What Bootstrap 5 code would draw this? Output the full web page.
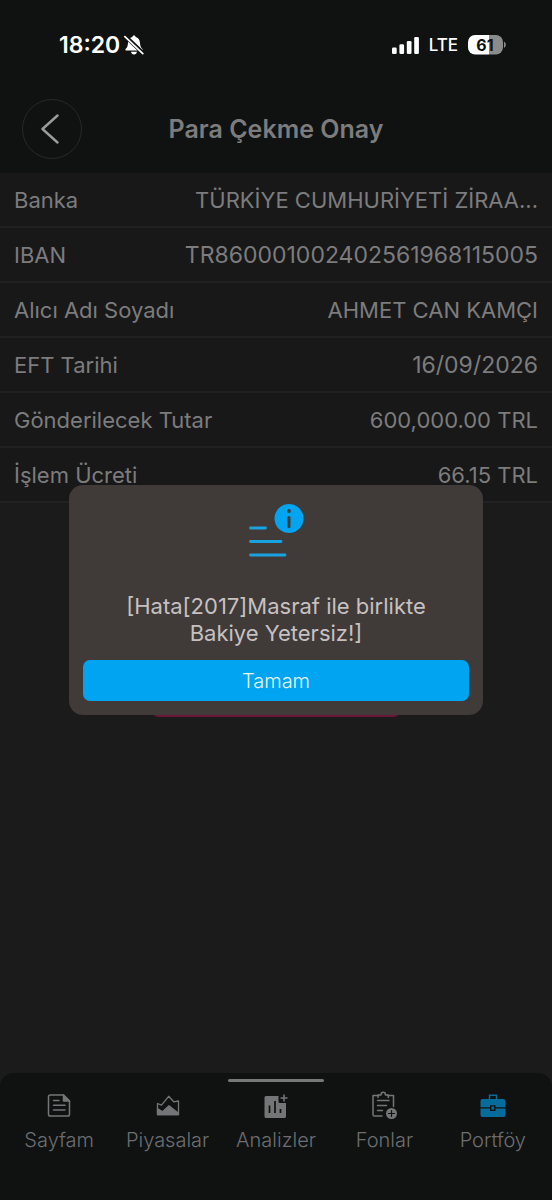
<!DOCTYPE html>
<html lang="tr">
<head>
<meta charset="utf-8">
<meta name="viewport" content="width=device-width, initial-scale=1">
<title>Para Çekme Onay</title>
<link href="https://cdn.jsdelivr.net/npm/bootstrap@5.3.0/dist/css/bootstrap.min.css" rel="stylesheet">
<style>
  body { background: #1b1b1b; color: #7c7c7e; font-family: Inter, "Liberation Sans", sans-serif; font-size: 22px; line-height: 28px; }
  .app-header { background: #101211; padding-bottom: 14px; }
  .status-bar { color: #fff; padding: 30px 46px 0 59px; height: 60px; }
  .status-bar .clock { font-size: 23px; font-weight: 600; }
  .status-bar .carrier { font-size: 17px; font-weight: 500; }
  .status-icons { gap: 10px; }
  .title-bar { margin-top: 39px; padding: 0 22px; display: grid; grid-template-columns: 60px 1fr 60px; align-items: center; }
  .title-bar h1 { font-size: 25px; font-weight: 600; line-height: 32px; }
  .back-btn { width: 60px; height: 60px; border: 1px solid #272928; color: #9b9b9b; }
  .details { background: #181818; color: #7c7c7e; }
  .details tr { height: 55px; padding: 0 14px; border-bottom: 2px solid #202122; }
  .details th, .details td { padding: 0; font-weight: 400; white-space: nowrap; }
  .details .digits { font-size: 23px; }
  .confirm-btn { width: 250px; height: 50px; margin-top: 164px; background: #6b1539; border-radius: 8px; }
  .tab-bar { background: #101211; border-radius: 14px 14px 0 0; height: 127px; padding: 6px 5px 0; }
  .tab-handle { width: 96px; height: 3px; background: #777879; }
  .tab-bar a { color: #6d6e71; font-size: 20px; font-weight: 300; line-height: 24px; }
  .tab-bar svg { display: block; margin: 8px auto 6px; }
  .alert-box { background: #403a38; border: 0; border-radius: 14px; padding: 14px; color: #c6c1c0; }
  .alert-box p { font-weight: 400; line-height: 27px; margin: 35px 0 13px; }
  .alert-box svg { display: block; margin: 3px auto 0; }
  .ok-btn, .ok-btn:hover { height: 41px; padding: 0; background: #00a4f0; color: #e6f6ff; border: 0; border-radius: 7px; font-size: 20px; font-weight: 300; }
</style>
</head>
<body class="min-vh-100 d-flex flex-column">
<header class="app-header">
  <div class="status-bar d-flex justify-content-between align-items-center">
    <div class="d-flex align-items-center gap-1">
      <span class="clock">18:20</span>
      <svg width="20" height="20" viewBox="0 0 20 20" role="img" aria-label="Sessiz">
        <path d="M10 .5c1 0 1.600.7 1.600 1.500 2.600.7 4.200 2.800 4.400 5.800.2 3.400.7 4.600 2.400 6.200.5.500.3 1.400-.5 1.400H2.100c-.8 0-1-.9-.5-1.400C3.300 12.400 3.800 11.200 4 7.800 4.200 4.800 5.800 2.700 8.400 2 8.400 1.200 9 .5 10 .5zM7 16.800h6c-.2 1.600-1.400 2.700-3 2.700s-2.800-1.100-3-2.700z" fill="#fff"/>
        <path d="M1.200 1.100 19 18" stroke="#101211" stroke-width="4"/>
        <path d="M.9 1.600 18.800 18.600" stroke="#fff" stroke-width="1.700" stroke-linecap="round"/>
      </svg>
    </div>
    <div class="status-icons d-flex align-items-center">
      <svg width="27" height="17" viewBox="0 0 27 17" fill="#fff" role="img" aria-label="Sinyal"><rect y="10.500" width="4.700" height="6.500" rx="1.300"/><rect x="7.400" y="7.300" width="4.700" height="9.700" rx="1.300"/><rect x="14.800" y="4" width="4.700" height="13" rx="1.300"/><rect x="22.200" width="4.700" height="17" rx="1.300"/></svg>
      <span class="carrier">LTE</span>
      <svg width="38" height="20" viewBox="0 0 38 20" role="img" aria-label="Pil yüzde 61">
        <path d="M7 0h14v19.500H7a7 7 0 0 1-7-7V7a7 7 0 0 1 7-7z" fill="#fff"/><path d="M21 0h7a7 7 0 0 1 7 7v5.500a7 7 0 0 1-7 7h-7z" fill="#8b8b8b"/><path d="M36 6.500c2.400 1.500 2.400 5 0 6.500z" fill="#8b8b8b"/>
        <text x="17" y="15.500" text-anchor="middle" font-family="Inter, sans-serif" font-size="16" font-weight="700" fill="#101211">61</text>
      </svg>
    </div>
  </div>
  <div class="title-bar">
    <button type="button" class="back-btn btn rounded-circle p-0 d-flex align-items-center justify-content-center" aria-label="Geri">
      <svg width="22" height="32" viewBox="0 0 22 32" fill="none" stroke="currentColor" stroke-width="2.400" stroke-linecap="round" stroke-linejoin="round"><path d="M16.500 2.500 1.500 16l15 13.500"/></svg>
    </button>
    <h1 class="m-0 text-center">Para Çekme Onay</h1>
  </div>
</header>

<main class="flex-grow-1">
  <table class="details d-block w-100">
    <tbody class="d-block">
      <tr class="d-flex justify-content-between align-items-center"><th scope="row">Banka</th><td>TÜRKİYE CUMHURİYETİ ZİRAA...</td></tr>
      <tr class="d-flex justify-content-between align-items-center"><th scope="row">IBAN</th><td class="digits">TR860001002402561968115005</td></tr>
      <tr class="d-flex justify-content-between align-items-center"><th scope="row">Alıcı Adı Soyadı</th><td>AHMET CAN KAMÇI</td></tr>
      <tr class="d-flex justify-content-between align-items-center"><th scope="row">EFT Tarihi</th><td class="digits">16/09/2026</td></tr>
      <tr class="d-flex justify-content-between align-items-center"><th scope="row">Gönderilecek Tutar</th><td>600,000.00 TRL</td></tr>
      <tr class="d-flex justify-content-between align-items-center"><th scope="row">İşlem Ücreti</th><td>66.15 TRL</td></tr>
    </tbody>
  </table>
  <button type="button" class="confirm-btn btn d-block mx-auto" aria-label="Onayla"></button>
</main>

<nav class="tab-bar">
  <div class="tab-handle rounded-pill mx-auto"></div>
  <div class="row g-0 text-center">
    <a href="#" class="col text-decoration-none">
      <svg width="28" height="32" viewBox="0 0 28 32" fill="none" stroke="#747577" stroke-width="1.500" stroke-linecap="round" stroke-linejoin="round"><path d="M18.500 5H5.300Q3.500 5 3.500 6.800v17.400Q3.500 26 5.300 26h17.400q1.800 0 1.800-1.800V11z"/><path d="M18.500 5v6h6z" fill="#747577"/><path d="M8.500 10.500h5.500M8.500 15.200h11.500M8.500 20h11.500"/></svg>
      Sayfam</a>
    <a href="#" class="col text-decoration-none">
      <svg width="28" height="32" viewBox="0 0 28 32" fill="none" stroke="#747577" stroke-width="1.300" stroke-linejoin="round"><path d="M3.500 24.500V13.500l4 1.700L14.700 6.300l5 5.500 4.800-.8v13.500z"/><path d="M3.500 18.500l5 3.300 6.500-6 5 4 4.500 3.500v1.200h-21z" fill="#747577"/></svg>
      Piyasalar</a>
    <a href="#" class="col text-decoration-none">
      <svg width="28" height="32" viewBox="0 0 28 32"><path d="M4 6h12.500v5.500q0 1.500 1.500 1.500h6v13.500q0 1.500-1.500 1.500H4q-1.500 0-1.500-1.500V7.500Q2.500 6 4 6z" fill="#747577"/><path d="M7.500 15.500v7.500M13 11v12M18.500 19v4" stroke="#101211" stroke-width="1.700"/><path d="M22 4.500v7M18.500 8h7" stroke="#747577" stroke-width="1.600"/></svg>
      Analizler</a>
    <a href="#" class="col text-decoration-none">
      <svg width="28" height="32" viewBox="0 0 28 32" fill="none" stroke="#747577" stroke-width="1.500" stroke-linecap="round" stroke-linejoin="round"><path d="M12 26H4.300Q3 26 3 24.700V5.500h5.500M17.500 5.500H23.500V16.500"/><path d="M8 7.500V5h3c0-3.600 4.500-3.600 4.500 0h2.800v2.500M7.500 10.500h11.500M7.500 15.500h9M7.500 20.500h5"/><circle cx="21.500" cy="23.500" r="5.500" fill="#747577" stroke="none"/><path d="M21.500 20.500v6M18.500 23.500h6" stroke="#101211" stroke-width="1.200"/></svg>
      Fonlar</a>
    <a href="#" class="col text-decoration-none" aria-current="page">
      <svg width="28" height="32" viewBox="0 0 28 32"><path d="M3.500 9h20.500q2.500 0 2.500 2v6.300h-10V15.200H11v2.100H1.500V11q0-2 2-2zM1.500 18.500H11V21h5.500v-2.500h10V25q0 2-2 2h-21q-2 0-2-2z" fill="#066c9c"/><path d="M10.500 9V5.300h7V9" fill="none" stroke="#066c9c" stroke-width="1.500"/><rect x="12.400" y="16.500" width="2.700" height="3.200" fill="#066c9c"/></svg>
      Portföy</a>
  </div>
</nav>

<div class="modal d-block" role="dialog" aria-modal="true" aria-labelledby="alertText">
  <div class="modal-dialog modal-dialog-centered w-75 mx-auto">
    <div class="alert-box modal-content text-center">
      <svg width="56" height="56" viewBox="0 0 56 56" fill="none" stroke="#18a2df" stroke-width="2.800" stroke-linecap="round"><path d="M2.500 26h15M2.500 39.500h30.500M2.500 53h34.500"/><circle cx="41" cy="16.500" r="14.500" fill="#00a4f0" stroke="none"/><path d="M41 15.500v9" stroke="#403a38" stroke-width="3"/><circle cx="41" cy="9" r="1.900" fill="#403a38" stroke="none"/></svg>
      <p id="alertText">[Hata[2017]Masraf ile birlikte<br>Bakiye Yetersiz!]</p>
      <button type="button" class="ok-btn btn w-100">Tamam</button>
    </div>
  </div>
</div>
<script src="https://cdn.jsdelivr.net/npm/bootstrap@5.3.0/dist/js/bootstrap.bundle.min.js"></script>
</body>
</html>
